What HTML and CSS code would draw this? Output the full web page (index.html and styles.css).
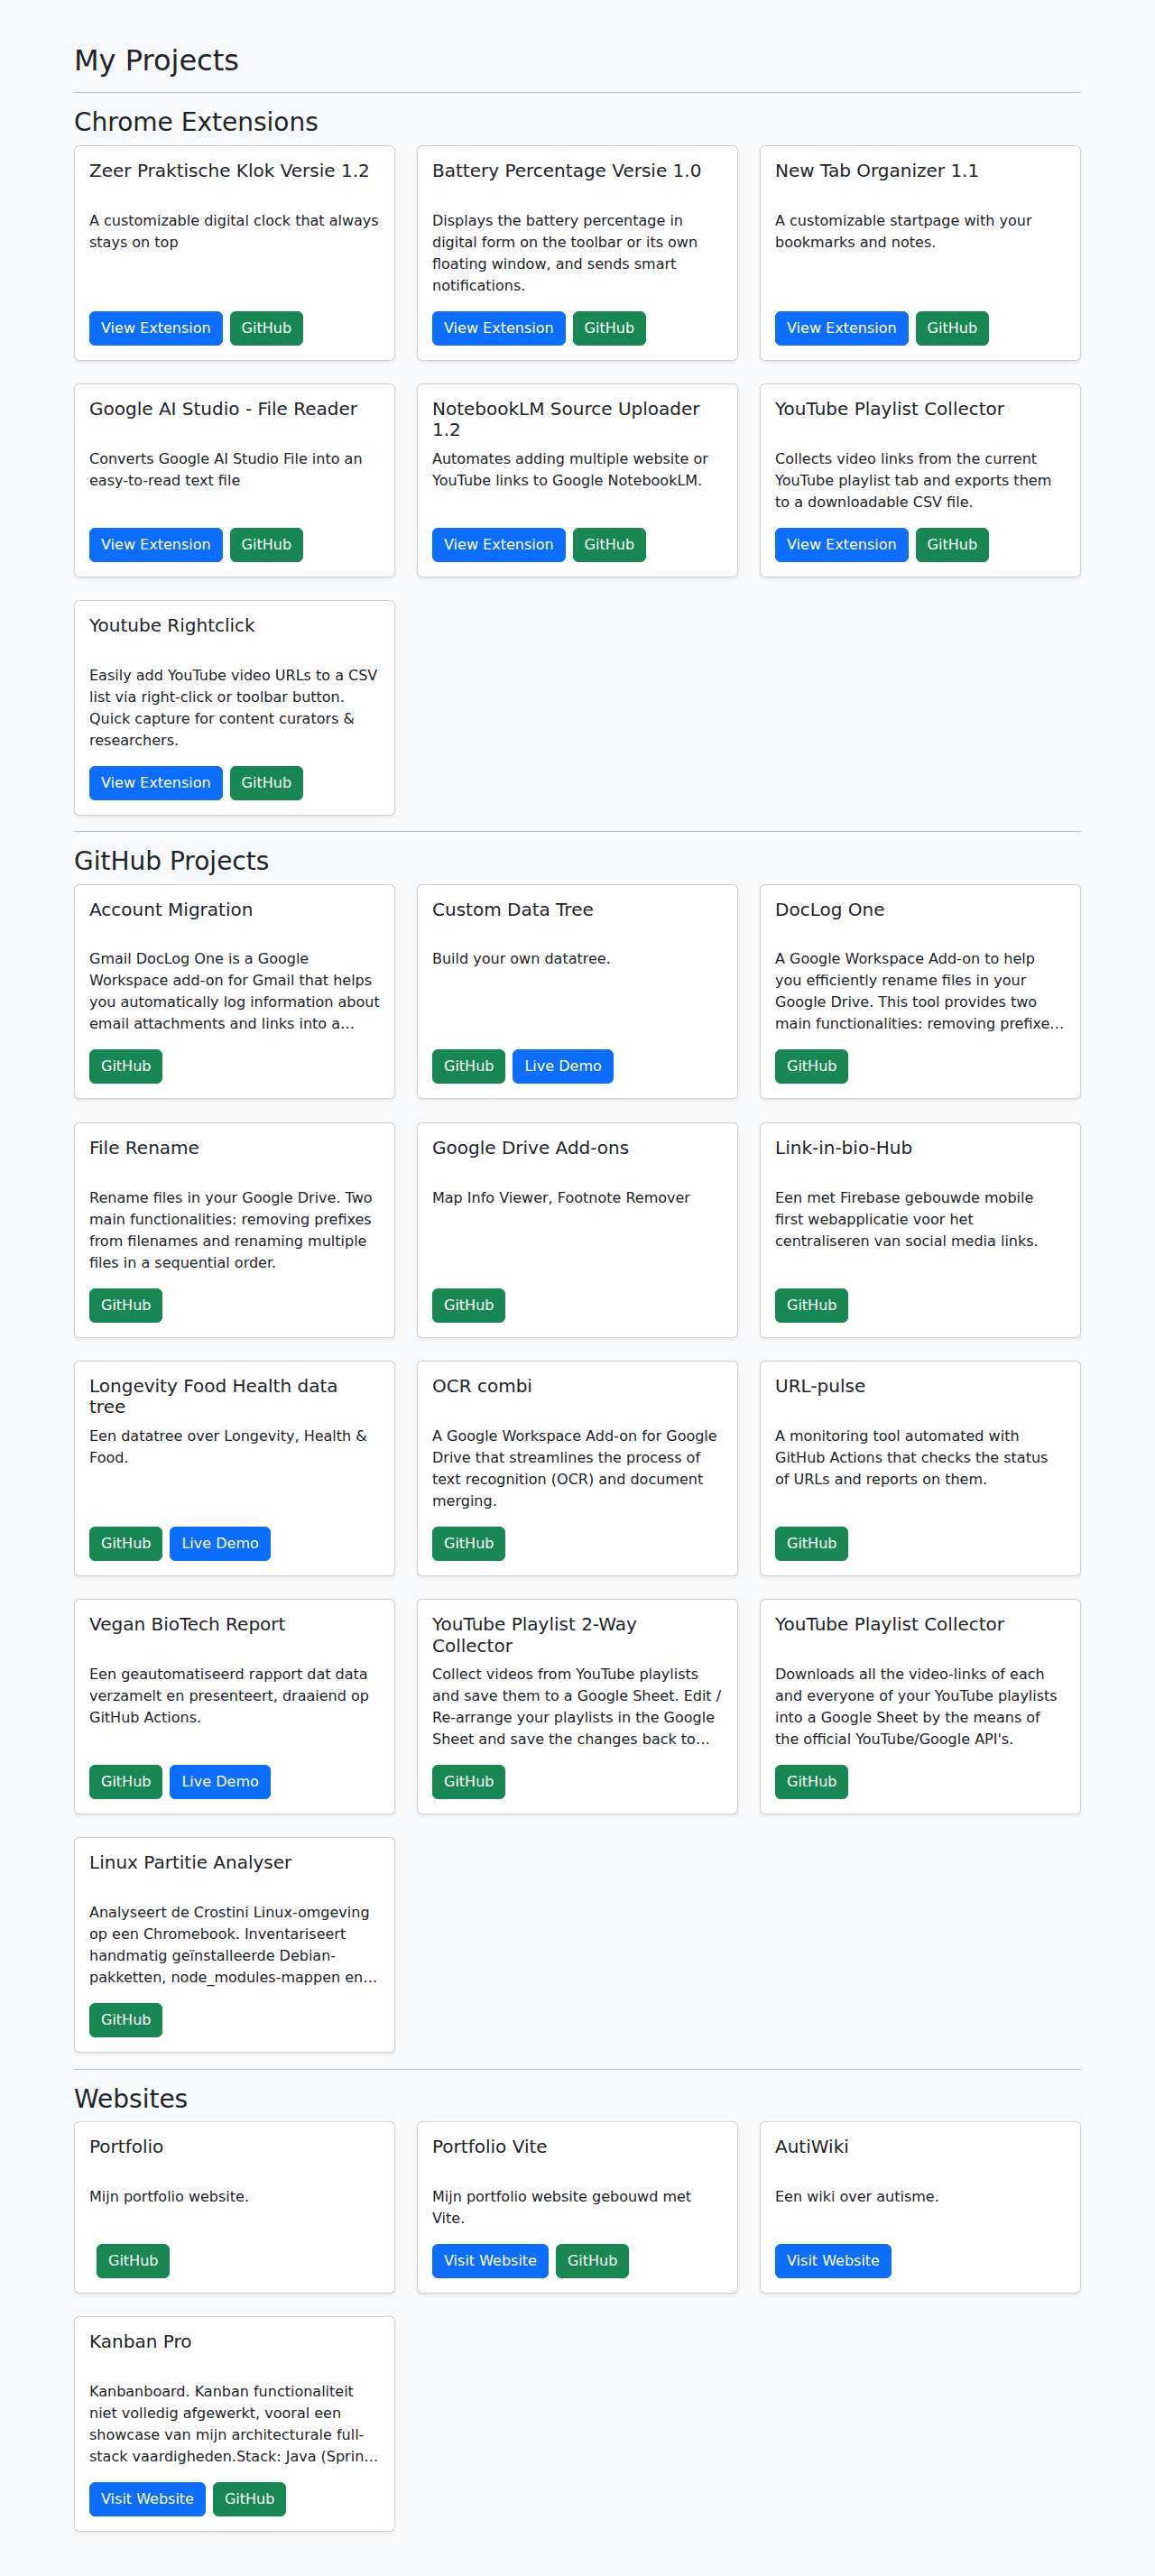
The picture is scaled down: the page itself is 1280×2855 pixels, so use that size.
FILE: index.html
```html
<!DOCTYPE html>
<html lang="nl">
<head>
<meta charset="utf-8">
<title>My Projects</title>
<link rel="stylesheet" href="styles.css">
</head>
<body>
<main class="container">
  <h1 class="page-title">My Projects</h1>
  <hr class="divider">

  <section class="section">
    <h2 class="section-title">Chrome Extensions</h2>
    <div class="card-grid">
      <article class="card">
        <h3 class="card-title">Zeer Praktische Klok Versie 1.2</h3>
        <p class="card-text">A customizable digital clock that always stays on top</p>
        <div class="actions"><a class="btn btn-blue" href="#">View Extension</a><a class="btn btn-green" href="#">GitHub</a></div>
      </article>
      <article class="card">
        <h3 class="card-title">Battery Percentage Versie 1.0</h3>
        <p class="card-text">Displays the battery percentage in digital form on the toolbar or its own floating window, and sends smart notifications.</p>
        <div class="actions"><a class="btn btn-blue" href="#">View Extension</a><a class="btn btn-green" href="#">GitHub</a></div>
      </article>
      <article class="card">
        <h3 class="card-title">New Tab Organizer 1.1</h3>
        <p class="card-text">A customizable startpage with your bookmarks and notes.</p>
        <div class="actions"><a class="btn btn-blue" href="#">View Extension</a><a class="btn btn-green" href="#">GitHub</a></div>
      </article>
      <article class="card">
        <h3 class="card-title">Google AI Studio - File Reader</h3>
        <p class="card-text">Converts Google AI Studio File into an easy-to-read text file</p>
        <div class="actions"><a class="btn btn-blue" href="#">View Extension</a><a class="btn btn-green" href="#">GitHub</a></div>
      </article>
      <article class="card">
        <h3 class="card-title">NotebookLM Source Uploader 1.2</h3>
        <p class="card-text">Automates adding multiple website or YouTube links to Google NotebookLM.</p>
        <div class="actions"><a class="btn btn-blue" href="#">View Extension</a><a class="btn btn-green" href="#">GitHub</a></div>
      </article>
      <article class="card">
        <h3 class="card-title">YouTube Playlist Collector</h3>
        <p class="card-text">Collects video links from the current YouTube playlist tab and exports them to a downloadable CSV file.</p>
        <div class="actions"><a class="btn btn-blue" href="#">View Extension</a><a class="btn btn-green" href="#">GitHub</a></div>
      </article>
      <article class="card">
        <h3 class="card-title">Youtube Rightclick</h3>
        <p class="card-text">Easily add YouTube video URLs to a CSV list via right-click or toolbar button. Quick capture for content curators &amp; researchers.</p>
        <div class="actions"><a class="btn btn-blue" href="#">View Extension</a><a class="btn btn-green" href="#">GitHub</a></div>
      </article>
    </div>
  </section>
  <hr class="divider">

  <section class="section">
    <h2 class="section-title">GitHub Projects</h2>
    <div class="card-grid">
      <article class="card">
        <h3 class="card-title">Account Migration</h3>
        <p class="card-text">Gmail DocLog One is a Google Workspace add-on for Gmail that helps you automatically log information about email attachments and links into a Google Sheet.</p>
        <div class="actions"><a class="btn btn-green" href="#">GitHub</a></div>
      </article>
      <article class="card">
        <h3 class="card-title">Custom Data Tree</h3>
        <p class="card-text">Build your own datatree.</p>
        <div class="actions"><a class="btn btn-green" href="#">GitHub</a><a class="btn btn-blue" href="#">Live Demo</a></div>
      </article>
      <article class="card">
        <h3 class="card-title">DocLog One</h3>
        <p class="card-text">A Google Workspace Add-on to help you efficiently rename files in your Google Drive. This tool provides two main functionalities: removing prefixes from filenames and renaming multiple files.</p>
        <div class="actions"><a class="btn btn-green" href="#">GitHub</a></div>
      </article>
      <article class="card">
        <h3 class="card-title">File Rename</h3>
        <p class="card-text">Rename files in your Google Drive. Two main functionalities: removing prefixes from filenames and renaming multiple files in a sequential order.</p>
        <div class="actions"><a class="btn btn-green" href="#">GitHub</a></div>
      </article>
      <article class="card">
        <h3 class="card-title">Google Drive Add-ons</h3>
        <p class="card-text">Map Info Viewer, Footnote Remover</p>
        <div class="actions"><a class="btn btn-green" href="#">GitHub</a></div>
      </article>
      <article class="card">
        <h3 class="card-title">Link-in-bio-Hub</h3>
        <p class="card-text">Een met Firebase gebouwde mobile first webapplicatie voor het centraliseren van social media links.</p>
        <div class="actions"><a class="btn btn-green" href="#">GitHub</a></div>
      </article>
      <article class="card">
        <h3 class="card-title">Longevity Food Health data tree</h3>
        <p class="card-text">Een datatree over Longevity, Health &amp; Food.</p>
        <div class="actions"><a class="btn btn-green" href="#">GitHub</a><a class="btn btn-blue" href="#">Live Demo</a></div>
      </article>
      <article class="card">
        <h3 class="card-title">OCR combi</h3>
        <p class="card-text">A Google Workspace Add-on for Google Drive that streamlines the process of text recognition (OCR) and document merging.</p>
        <div class="actions"><a class="btn btn-green" href="#">GitHub</a></div>
      </article>
      <article class="card">
        <h3 class="card-title">URL-pulse</h3>
        <p class="card-text">A monitoring tool automated with GitHub Actions that checks the status of URLs and reports on them.</p>
        <div class="actions"><a class="btn btn-green" href="#">GitHub</a></div>
      </article>
      <article class="card">
        <h3 class="card-title">Vegan BioTech Report</h3>
        <p class="card-text">Een geautomatiseerd rapport dat data verzamelt en presenteert, draaiend op GitHub Actions.</p>
        <div class="actions"><a class="btn btn-green" href="#">GitHub</a><a class="btn btn-blue" href="#">Live Demo</a></div>
      </article>
      <article class="card">
        <h3 class="card-title">YouTube Playlist 2-Way Collector</h3>
        <p class="card-text">Collect videos from YouTube playlists and save them to a Google Sheet. Edit / Re-arrange your playlists in the Google Sheet and save the changes back to YouTube.</p>
        <div class="actions"><a class="btn btn-green" href="#">GitHub</a></div>
      </article>
      <article class="card">
        <h3 class="card-title">YouTube Playlist Collector</h3>
        <p class="card-text">Downloads all the video-links of each and everyone of your YouTube playlists into a Google Sheet by the means of the official YouTube/Google API's.</p>
        <div class="actions"><a class="btn btn-green" href="#">GitHub</a></div>
      </article>
      <article class="card">
        <h3 class="card-title">Linux Partitie Analyser</h3>
        <p class="card-text">Analyseert de Crostini Linux-omgeving op een Chromebook. Inventariseert handmatig geïnstalleerde Debian-pakketten, node_modules-mappen en meer.</p>
        <div class="actions"><a class="btn btn-green" href="#">GitHub</a></div>
      </article>
    </div>
  </section>
  <hr class="divider">

  <section class="section">
    <h2 class="section-title">Websites</h2>
    <div class="card-grid">
      <article class="card">
        <h3 class="card-title">Portfolio</h3>
        <p class="card-text">Mijn portfolio website.</p>
        <div class="actions"><span class="btn-placeholder"></span><a class="btn btn-green" href="#">GitHub</a></div>
      </article>
      <article class="card">
        <h3 class="card-title">Portfolio Vite</h3>
        <p class="card-text">Mijn portfolio website gebouwd met Vite.</p>
        <div class="actions"><a class="btn btn-blue" href="#">Visit Website</a><a class="btn btn-green" href="#">GitHub</a></div>
      </article>
      <article class="card">
        <h3 class="card-title">AutiWiki</h3>
        <p class="card-text">Een wiki over autisme.</p>
        <div class="actions"><a class="btn btn-blue" href="#">Visit Website</a></div>
      </article>
      <article class="card">
        <h3 class="card-title">Kanban Pro</h3>
        <p class="card-text">Kanbanboard. Kanban functionaliteit niet volledig afgewerkt, vooral een showcase van mijn architecturale full-stack vaardigheden.Stack: Java (Spring Boot), PostgreSQL, React.</p>
        <div class="actions"><a class="btn btn-blue" href="#">Visit Website</a><a class="btn btn-green" href="#">GitHub</a></div>
      </article>
    </div>
  </section>
</main>
</body>
</html>
```

FILE: styles.css
```css
* {
  box-sizing: border-box;
}

html, body {
  margin: 0;
  padding: 0;
}

body {
  background: #f8f9fa;
  color: #212529;
  font-family: "DejaVu Sans", "Liberation Sans", sans-serif;
  font-size: 16px;
  line-height: 1.5;
}

.container {
  width: 1140px;
  margin: 0 auto;
  padding: 48px 12px;
}

.page-title {
  font-size: 32px;
  font-weight: 400;
  line-height: 1.2;
  margin: 0 0 8px;
}

.divider {
  border: 0;
  border-top: 1px solid rgba(33, 37, 41, 0.25);
  margin: 16px 0;
  height: 0;
}

.section {
  padding-bottom: 1.5px;
}

.section-title {
  font-size: 28px;
  font-weight: 400;
  line-height: 1.2;
  margin: 0 0 8px;
}

.card-grid {
  display: grid;
  grid-template-columns: repeat(3, 1fr);
  column-gap: 24px;
  row-gap: 25.6px;
}

.card {
  display: flex;
  flex-direction: column;
  background: #fff;
  border: 1px solid rgba(0, 0, 0, 0.175);
  border-radius: 6px;
  box-shadow: 0 2px 4px rgba(0, 0, 0, 0.075);
  padding: 16px;
}

.card-title {
  font-size: 20px;
  font-weight: 400;
  line-height: 1.164;
  min-height: 46.56px;
  margin: 0 0 8px;
}

.card-text {
  margin: 0 0 16px;
  display: -webkit-box;
  -webkit-box-orient: vertical;
  -webkit-line-clamp: 4;
  overflow: hidden;
}

.actions {
  margin-top: auto;
  display: flex;
  gap: 8px;
}

.btn {
  display: inline-block;
  padding: 6px 12px;
  border: 1px solid transparent;
  border-radius: 6px;
  font-size: 16px;
  line-height: 1.5;
  color: #fff;
  text-decoration: none;
}

.btn-blue {
  background: #0d6efd;
  border-color: #0d6efd;
}

.btn-green {
  background: #198754;
  border-color: #198754;
}

.btn-placeholder {
  display: block;
  width: 0;
}
```
